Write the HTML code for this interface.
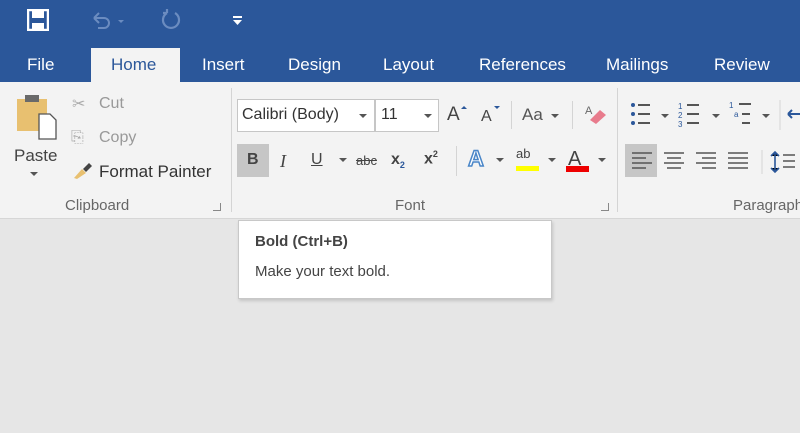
<!DOCTYPE html><html><head><style>
body{margin:0;width:800px;height:433px;overflow:hidden;background:#e6e6e6;font-family:"Liberation Sans",sans-serif;position:relative}
.a{position:absolute;white-space:nowrap}
.tab{color:#fff;font-size:17px;top:55px}
.t{color:#444;font-size:16px}
.g{color:#666;font-size:15px;top:197px}
.sep{position:absolute;width:1px;background:#d4d4d4}
</style></head><body>
<div class="a" style="left:0;top:0;width:800px;height:82px;background:#2b579a"></div>
<div class="a" style="left:0;top:82px;width:800px;height:136px;background:#f3f3f3;border-bottom:1px solid #d6d6d6"></div>
<div class="a" style="left:91px;top:48px;width:89px;height:36px;background:#f3f3f3"></div>
<!-- qat -->
<svg class="a" style="left:27px;top:9px" width="22" height="22"><rect x="1" y="1" width="20" height="20" fill="none" stroke="#fff" stroke-width="2.5"/><rect x="5" y="2" width="12" height="7" fill="#fff"/><rect x="5" y="14" width="12" height="7" fill="#fff"/></svg>
<svg class="a" style="left:90px;top:10px" width="40" height="20"><path d="M4 8 H14 A5 5 0 0 1 14 18 H8 M4 8 L9 3 M4 8 L9 13" fill="none" stroke="#6b8cc0" stroke-width="2"/><path d="M28 10 l3 3 l3-3z" fill="#6b8cc0"/></svg>
<svg class="a" style="left:160px;top:8px" width="22" height="22"><path d="M15 5 A8 8 0 1 1 7 5 M7 5 V1 M7 5 H3" fill="none" stroke="#6b8cc0" stroke-width="2.2"/></svg>
<svg class="a" style="left:232px;top:15px" width="12" height="12"><rect x="1" y="1" width="9" height="2" fill="#fff"/><path d="M1 5 h9 l-4.5 5z" fill="#fff"/></svg>
<div class="a tab" style="left:27px">File</div>
<div class="a tab" style="left:111px;color:#2b579a">Home</div>
<div class="a tab" style="left:202px">Insert</div>
<div class="a tab" style="left:288px">Design</div>
<div class="a tab" style="left:383px">Layout</div>
<div class="a tab" style="left:479px">References</div>
<div class="a tab" style="left:606px">Mailings</div>
<div class="a tab" style="left:714px">Review</div>
<!-- clipboard -->
<svg class="a" style="left:16px;top:94px" width="45" height="48"><rect x="1" y="5" width="30" height="32" fill="#e8c070"/><rect x="9" y="1" width="14" height="7" fill="#6a6a6a"/><path d="M23 20 h11 l6 6 v19 h-17z" fill="#fff" stroke="#555" stroke-width="1.3"/></svg>
<div class="a t" style="left:14px;top:146px;font-size:17px">Paste</div>
<div class="a" style="left:30px;top:172px;border:4px solid transparent;border-top-color:#555"></div>
<div class="a t" style="left:72px;top:94px;color:#aaa">✂</div>
<div class="a t" style="left:99px;top:95px;color:#999">Cut</div>
<div class="a t" style="left:71px;top:129px;color:#aaa">⎘</div>
<div class="a t" style="left:99px;top:129px;color:#999">Copy</div>
<svg class="a" style="left:72px;top:162px" width="22" height="18"><path d="M2 16 l8-9 4 4 -9 6z" fill="#e8c070"/><path d="M11 7 l6-6 3 3 -6 6z" fill="#444"/></svg>
<div class="a t" style="left:99px;top:162px;font-size:17px;color:#333">Format Painter</div>
<div class="a g" style="left:65px">Clipboard</div>
<div class="a" style="left:213px;top:203px;width:7px;height:7px;border-right:1px solid #888;border-bottom:1px solid #888"></div>
<div class="sep" style="left:231px;top:88px;height:124px"></div>
<!-- font -->
<div class="a" style="left:237px;top:99px;width:136px;height:31px;background:#fff;border:1px solid #c6c6c6"></div>
<div class="a t" style="left:242px;top:106px;color:#333">Calibri (Body)</div>
<div class="a" style="left:359px;top:114px;border:4px solid transparent;border-top-color:#555"></div>
<div class="a" style="left:375px;top:99px;width:62px;height:31px;background:#fff;border:1px solid #c6c6c6"></div>
<div class="a t" style="left:381px;top:106px;color:#333">11</div>
<div class="a" style="left:424px;top:114px;border:4px solid transparent;border-top-color:#555"></div>
<div class="a t" style="left:447px;top:104px;font-size:19px">A</div><div class="a" style="left:461px;top:103px;border:3px solid transparent;border-bottom-color:#2b579a"></div>
<div class="a t" style="left:481px;top:108px;font-size:16px">A</div><div class="a" style="left:494px;top:106px;border:3px solid transparent;border-top-color:#2b579a"></div>
<div class="sep" style="left:511px;top:101px;height:28px"></div>
<div class="a t" style="left:522px;top:105px;font-size:17px;color:#555">Aa</div>
<div class="a" style="left:551px;top:114px;border:4px solid transparent;border-top-color:#555"></div>
<div class="sep" style="left:572px;top:101px;height:28px"></div>
<svg class="a" style="left:584px;top:102px" width="24" height="24"><text x="1" y="12" font-size="11" fill="#666" font-family="Liberation Sans">A</text><path d="M6 18 l10-10 6 5 -10 9z" fill="#e87b8c"/></svg>
<div class="a" style="left:237px;top:144px;width:32px;height:33px;background:#c6c6c6"></div>
<div class="a t" style="left:247px;top:151px;font-weight:bold;color:#444">B</div>
<div class="a t" style="left:280px;top:151px;font-style:italic;font-family:'Liberation Serif';font-size:18px">I</div>
<div class="a t" style="left:311px;top:151px;text-decoration:underline">U</div>
<div class="a" style="left:339px;top:158px;border:4px solid transparent;border-top-color:#555"></div>
<div class="a t" style="left:356px;top:153px;font-size:13px;text-decoration:line-through">abc</div>
<div class="a t" style="left:391px;top:151px;font-weight:bold">x<sub style="font-size:9px;color:#2b579a">2</sub></div>
<div class="a t" style="left:424px;top:149px;font-weight:bold">x<sup style="font-size:9px">2</sup></div>
<div class="sep" style="left:456px;top:146px;height:30px"></div>
<div class="a" style="left:468px;top:146px;font-size:22px;color:#fff;-webkit-text-stroke:1.5px #4a86c8;font-weight:bold">A</div>
<div class="a" style="left:496px;top:158px;border:4px solid transparent;border-top-color:#555"></div>
<div class="a t" style="left:516px;top:146px;font-size:13px">ab</div>
<div class="a" style="left:516px;top:166px;width:23px;height:5px;background:#ff0"></div>
<div class="a" style="left:548px;top:158px;border:4px solid transparent;border-top-color:#555"></div>
<div class="a t" style="left:568px;top:148px;font-size:20px">A</div>
<div class="a" style="left:566px;top:166px;width:23px;height:6px;background:#e00"></div>
<div class="a" style="left:598px;top:158px;border:4px solid transparent;border-top-color:#555"></div>
<div class="a g" style="left:395px">Font</div>
<div class="a" style="left:601px;top:203px;width:7px;height:7px;border-right:1px solid #888;border-bottom:1px solid #888"></div>
<div class="sep" style="left:617px;top:88px;height:124px"></div>
<!-- paragraph -->
<svg class="a" style="left:628px;top:100px" width="172" height="30">
<g fill="#2b579a"><circle cx="5" cy="5" r="2"/><circle cx="5" cy="14" r="2"/><circle cx="5" cy="23" r="2"/></g>
<g stroke="#555" stroke-width="2"><path d="M10 5h12M10 14h12M10 23h12M59 5h12M59 14h12M59 23h12M111 4h12M114 14h8M114 23h8"/></g>
<path d="M33 14l4 4 4-4z M84 14l4 4 4-4z M134 14l4 4 4-4z" fill="#555"/>
<text x="50" y="9" font-size="8" fill="#2b579a">1</text><text x="50" y="18" font-size="8" fill="#2b579a">2</text><text x="50" y="27" font-size="8" fill="#2b579a">3</text>
<text x="101" y="8" font-size="8" fill="#2b579a">1</text><text x="106" y="17" font-size="8" fill="#2b579a">a</text>
<path d="M152 0v30" stroke="#d4d4d4"/><path d="M160 14h12M160 14l4-4M160 14l4 4" stroke="#2b579a" stroke-width="2" fill="none"/></svg>
<div class="a" style="left:625px;top:144px;width:32px;height:33px;background:#c6c6c6"></div>
<svg class="a" style="left:630px;top:150px" width="170" height="24" stroke="#555" stroke-width="1.6">
<path d="M2 3h20M2 8h14M2 13h20M2 18h14"/><path d="M34 3h20M37 8h14M34 13h20M37 18h14"/><path d="M66 3h20M72 8h14M66 13h20M72 18h14"/><path d="M98 3h20M98 8h20M98 13h20M98 18h20"/>
<path d="M132 0v24" stroke="#d4d4d4" stroke-width="1"/><path d="M145 2v20M141 6l4-4 4 4M141 18l4 4 4-4" stroke="#2b579a"/><path d="M153 5h12M153 11h12M153 17h12"/></svg>
<div class="a g" style="left:733px">Paragraph</div>
<!-- tooltip -->
<div class="a" style="left:238px;top:220px;width:312px;height:77px;background:#fff;border:1px solid #c8c8c8;box-shadow:1px 2px 3px rgba(0,0,0,.15)"></div>
<div class="a" style="left:255px;top:233px;font-size:15px;font-weight:bold;color:#444">Bold (Ctrl+B)</div>
<div class="a" style="left:255px;top:263px;font-size:15px;color:#444">Make your text bold.</div>
</body></html>
